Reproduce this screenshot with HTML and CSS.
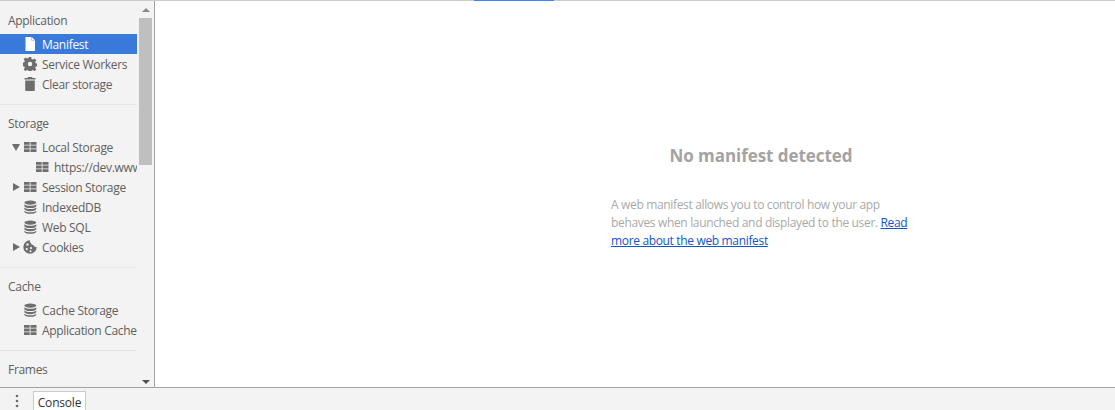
FILE: index.html
```html
<!DOCTYPE html>
<html>

<head>
    <meta charset="utf-8">
    <title>Application panel</title>
    <link rel="stylesheet" href="styles.css">
</head>

<body>

<svg class="defs" width="0" height="0">
    <symbol id="i-table" viewBox="0 0 14 14">
        <path d="M1 2h5.700v2.700H1zM7.500 2H13.500v2.700H7.500zM1 5.600h5.700v2.800H1zM7.500 5.600H13.500v2.800H7.500zM1 9.300h5.700V12H1zM7.500 9.300H13.500V12H7.500z"/>
    </symbol>
    <symbol id="i-db" viewBox="0 0 14 14">
        <path transform="translate(-0.300 0) scale(1.090 1)" d="M7 0.500c3.200 0 5.500 1 5.500 2.100S10.200 4.700 7 4.700 1.500 3.700 1.500 2.600 3.800 0.500 7 0.500zM1.500 4.200c1 1.100 3.200 1.600 5.500 1.600s4.500-.5 5.500-1.600v1.700c0 1.200-2.300 2.100-5.500 2.100s-5.500-.9-5.500-2.100zM1.500 7.500c1 1.100 3.200 1.600 5.500 1.600s4.500-.5 5.500-1.600v1.600c0 1.200-2.300 2.100-5.500 2.100s-5.500-.9-5.500-2.100zM1.500 10.700c1 1.100 3.200 1.600 5.500 1.600s4.500-.5 5.500-1.600v1c0 1.200-2.300 2.100-5.500 2.100s-5.500-.9-5.500-2.100z"/>
    </symbol>
</svg>

<div class="topline"><span class="loading"></span></div>

<div class="panel">
    <div class="sidebar">
        <div class="tree">
            <div class="section">
                <div class="section-title">Application</div>
                <div class="row selected">
                    <svg class="icon" viewBox="0 0 14 14"><path d="M2.500 0H8.500L12 3.500V14H2.500zM8.500 0V3.500H12z" fill-rule="evenodd"/><path d="M8.800 0L12 3.200H8.800z"/></svg>
                    <span>Manifest</span>
                </div>
                <div class="row">
                    <svg class="icon" viewBox="0 0 14 14"><path fill-rule="evenodd" d="M5.800 0h2.400l.4 2 1.300.6 1.700-1.100 1.700 1.700-1.100 1.700.5 1.300 2 .4v2.400l-2 .4-.5 1.300 1.100 1.700-1.700 1.700-1.700-1.100-1.300.5-.4 2H5.800l-.4-2-1.300-.5-1.700 1.100-1.700-1.700 1.100-1.700-.5-1.300-2-.4V5.600l2-.4.500-1.300L.7 2.200l1.700-1.700 1.700 1.100 1.300-.6zM7 4.800a2.200 2.200 0 1 0 0 4.400 2.200 2.200 0 0 0 0-4.400z"/></svg>
                    <span>Service Workers</span>
                </div>
                <div class="row">
                    <svg class="icon" viewBox="0 0 14 14"><path d="M5 0h4l.5 1H12.500v1.500H1.500V1h3zM2.200 3.500h9.600V13q0 1-1 1H3.200q-1 0-1-1z"/></svg>
                    <span>Clear storage</span>
                </div>
            </div>
            <div class="section">
                <div class="section-title">Storage</div>
                <div class="row">
                    <span class="arrow down"></span>
                    <svg class="icon"><use href="#i-table"/></svg>
                    <span>Local Storage</span>
                </div>
                <div class="row child">
                    <svg class="icon"><use href="#i-table"/></svg>
                    <span>https://dev.www</span>
                </div>
                <div class="row">
                    <span class="arrow right"></span>
                    <svg class="icon"><use href="#i-table"/></svg>
                    <span>Session Storage</span>
                </div>
                <div class="row">
                    <svg class="icon"><use href="#i-db"/></svg>
                    <span>IndexedDB</span>
                </div>
                <div class="row">
                    <svg class="icon"><use href="#i-db"/></svg>
                    <span>Web SQL</span>
                </div>
                <div class="row">
                    <span class="arrow right"></span>
                    <svg class="icon" viewBox="0 0 14 14"><path fill-rule="evenodd" d="M7 0.300a6.700 6.700 0 1 0 6.700 6.700c-1.500.3-2.600-.4-2.900-1.700-1.500.1-2.700-.8-2.800-2.200C7 2.900 6.700 1.500 7 .3zM4.500 3.300a1.200 1.200 0 1 0 0 2.400 1.200 1.200 0 0 0 0-2.400zM3.800 8a1.100 1.100 0 1 0 0 2.200 1.100 1.100 0 0 0 0-2.200zM8 7a1.100 1.100 0 1 0 0 2.200A1.100 1.100 0 0 0 8 7zM7.500 10.300a1 1 0 1 0 0 2 1 1 0 0 0 0-2z"/></svg>
                    <span>Cookies</span>
                </div>
            </div>
            <div class="section">
                <div class="section-title">Cache</div>
                <div class="row">
                    <svg class="icon"><use href="#i-db"/></svg>
                    <span>Cache Storage</span>
                </div>
                <div class="row">
                    <svg class="icon"><use href="#i-table"/></svg>
                    <span>Application Cache</span>
                </div>
            </div>
            <div class="section">
                <div class="section-title">Frames</div>
            </div>
        </div>
        <div class="scrollbar">
            <span class="scroll-btn up"></span>
            <div class="track"><div class="thumb"></div></div>
            <span class="scroll-btn dn"></span>
        </div>
    </div>

    <div class="content">
        <div class="empty">
            <h1>No manifest detected</h1>
            <p>A web manifest allows you to control how your app behaves when launched and displayed to the user. <a href="#">Read more about the web manifest</a></p>
        </div>
    </div>
</div>

<div class="drawer">
    <svg class="dots" width="4" height="14" viewBox="0 0 4 14"><circle cx="2" cy="2" r="1.300"/><circle cx="2" cy="7" r="1.300"/><circle cx="2" cy="12" r="1.300"/></svg>
    <div class="tab">Console</div>
</div>

</body>

</html>
```

FILE: styles.css
```css
* {
    margin: 0px;
    box-sizing: border-box;
}

html, body {
    height: 100%;
    overflow: hidden;
}

body {
    display: flex;
    flex-direction: column;
    font-family: "Open Sans", "Liberation Sans", sans-serif;
    font-size: 12px;
    color: #606060;
    background: #fff;
}

.defs {
    position: absolute;
}

.topline {
    height: 1px;
    flex: none;
    background: #ccc;
    padding-left: 474px;
}

.loading {
    display: block;
    width: 80px;
    height: 1px;
    background: #3b86f5;
}

.panel {
    flex: 1;
    display: flex;
    min-height: 0;
}

.sidebar {
    width: 155px;
    flex: none;
    display: flex;
    background: #f3f3f3;
    border-right: 1px solid #a3a3a3;
}

.tree {
    width: 137px;
    flex: none;
    overflow: hidden;
}

.section {
    padding: 9px 0px 10px;
    border-bottom: 1px solid #e6e6e6;
}

.section:first-child {
    padding-top: 10px;
}

.section:last-child {
    border-bottom: none;
}

.section-title {
    height: 20px;
    line-height: 20px;
    padding-left: 8px;
    margin-bottom: 3px;
    white-space: nowrap;
    letter-spacing: -0.3px;
}

.row {
    height: 20px;
    display: flex;
    align-items: center;
    position: relative;
    padding-left: 23px;
    white-space: nowrap;
    letter-spacing: -0.3px;
}

.row.child {
    padding-left: 35px;
}

.row.selected {
    background: #3879d9;
    color: #fff;
}

.icon {
    width: 14px;
    height: 14px;
    flex: none;
    margin-right: 5px;
    fill: #6e6e6e;
}

.selected .icon {
    fill: #fff;
}

.arrow {
    position: absolute;
    width: 0;
    height: 0;
}

.arrow.down {
    left: 12px;
    top: 7px;
    border-left: 4.5px solid transparent;
    border-right: 4.500px solid transparent;
    border-top: 7px solid #6e6e6e;
}

.arrow.right {
    left: 13px;
    top: 5.500px;
    border-top: 4.500px solid transparent;
    border-bottom: 4.500px solid transparent;
    border-left: 7px solid #6e6e6e;
}

.scrollbar {
    width: 17px;
    flex: none;
    display: flex;
    flex-direction: column;
    align-items: center;
}

.scroll-btn {
    flex: none;
    width: 0;
    height: 0;
    border-left: 4px solid transparent;
    border-right: 4px solid transparent;
}

.scroll-btn.up {
    margin: 7px 0px 6px;
    border-bottom: 4px solid #8a8a8a;
}

.scroll-btn.dn {
    margin: 6px 0px 3px;
    border-top: 4px solid #505050;
}

.track {
    flex: 1;
    width: 100%;
}

.thumb {
    width: 13px;
    height: 147px;
    margin-left: 2px;
    background: #bfbfbf;
}

.content {
    flex: 1;
    padding: 144px 0px 0px 456px;
    background: #fff;
}

.empty {
    width: 300px;
    color: #a9a9a9;
}

.empty h1 {
    font-size: 17px;
    font-weight: bold;
    line-height: 22px;
    text-align: center;
    color: #a3a3a3;
    letter-spacing: -0.05px;
}

.empty p {
    margin-top: 29px;
    line-height: 18px;
    letter-spacing: -0.34px;
}

.empty a {
    color: #1155cc;
}

.drawer {
    height: 23px;
    flex: none;
    display: flex;
    align-items: flex-end;
    background: #f3f3f3;
    border-top: 1px solid #a3a3a3;
}

.dots {
    margin: 0px 14px 2px 15px;
    fill: #6e6e6e;
}

.tab {
    width: 53px;
    height: 19px;
    line-height: 22px;
    text-align: center;
    background: #fff;
    border: 1px solid #ccc;
    border-bottom: none;
    color: #333;
    letter-spacing: -0.2px;
}
```
